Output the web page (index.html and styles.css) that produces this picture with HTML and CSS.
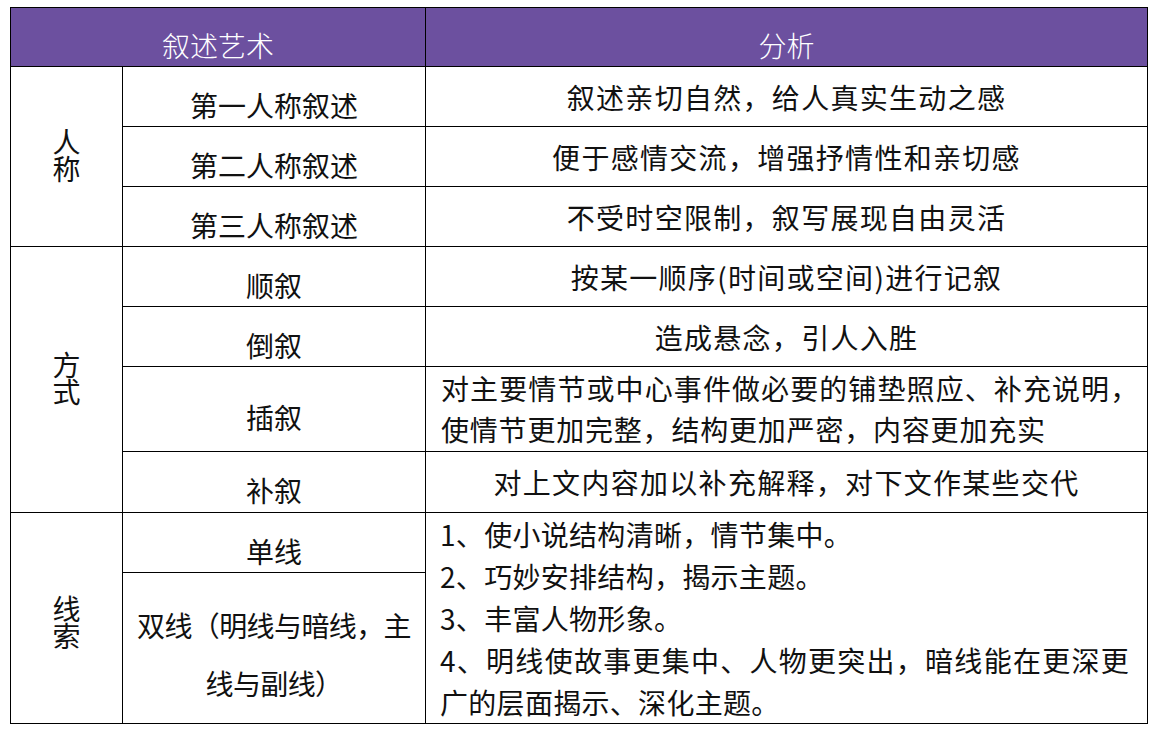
FILE: index.html
```html
<!DOCTYPE html>
<html lang="zh-CN">
<head>
<meta charset="utf-8">
<title>叙述艺术</title>
<link rel="stylesheet" href="styles.css">
</head>
<body>
<table class="narr">
  <colgroup><col class="c1"><col class="c2"><col class="c3"></colgroup>
  <thead>
    <tr class="head"><th colspan="2">叙述艺术</th><th>分析</th></tr>
  </thead>
  <tbody>
    <tr class="h60">
      <td rowspan="3" class="cat"><span class="vert">人称</span></td>
      <td class="kind">第一人称叙述</td>
      <td class="desc">叙述亲切自然，给人真实生动之感</td>
    </tr>
    <tr class="h60">
      <td class="kind">第二人称叙述</td>
      <td class="desc">便于感情交流，增强抒情性和亲切感</td>
    </tr>
    <tr class="h60">
      <td class="kind">第三人称叙述</td>
      <td class="desc">不受时空限制，叙写展现自由灵活</td>
    </tr>
    <tr class="h60">
      <td rowspan="4" class="cat"><span class="vert">方式</span></td>
      <td class="kind">顺叙</td>
      <td class="desc">按某一顺序(时间或空间)进行记叙</td>
    </tr>
    <tr class="h60">
      <td class="kind">倒叙</td>
      <td class="desc">造成悬念，引人入胜</td>
    </tr>
    <tr class="h85">
      <td class="kind">插叙</td>
      <td class="desc desc-lines">
        <div class="jline">对主要情节或中心事件做必要的铺垫照应、补充说明，</div>
        <div class="line">使情节更加完整，结构更加严密，内容更加充实</div>
      </td>
    </tr>
    <tr class="h61">
      <td class="kind">补叙</td>
      <td class="desc">对上文内容加以补充解释，对下文作某些交代</td>
    </tr>
    <tr class="h60">
      <td rowspan="2" class="cat cat-line"><span class="vert">线索</span></td>
      <td class="kind">单线</td>
      <td rowspan="2" class="desc desc-list">
        <div class="item">1、使小说结构清晰，情节集中。</div>
        <div class="item">2、巧妙安排结构，揭示主题。</div>
        <div class="item">3、丰富人物形象。</div>
        <div class="item jline">4、明线使故事更集中、人物更突出，暗线能在更深更</div>
        <div class="item">广的层面揭示、深化主题。</div>
      </td>
    </tr>
    <tr class="h150">
      <td class="kind kind-double">双线（明线与暗线，主<br>线与副线）</td>
    </tr>
  </tbody>
</table>
</body>
</html>
```

FILE: styles.css
```css
html, body {
  margin: 0;
  background: #ffffff;
}

body {
  padding: 7px 0 0 10px;
  font-family: "Noto Sans CJK SC", "Noto Sans", sans-serif;
  color: #111111;
}

.narr {
  border-collapse: collapse;
  table-layout: fixed;
  width: 1137px;
  font-size: 28px;
}

.c1 { width: 112px; }
.c2 { width: 303px; }
.c3 { width: 722px; }

.narr th,
.narr td {
  border: 1px solid #000000;
  padding: 0;
  text-align: center;
  vertical-align: middle;
  line-height: 30px;
  font-weight: 400;
}

.head { height: 59px; }
.h60 { height: 60px; }
.h61 { height: 61px; }
.h85 { height: 85px; }
.h150 { height: 151px; }

.narr .head th {
  background: #6c509f;
  color: #ffffff;
  font-weight: 300;
  padding-top: 16px;
}

.vert {
  display: inline-block;
  writing-mode: vertical-rl;
  text-orientation: upright;
  letter-spacing: -1px;
  line-height: 30px;
}

.narr td.cat-line {
  padding-top: 10px;
}

.narr td.kind {
  padding-top: 16px;
}

.narr td.desc {
  letter-spacing: 1.3px;
}

.narr td.kind-double {
  line-height: 58px;
  padding-top: 12px;
  letter-spacing: -0.6px;
}

.narr td.desc-lines {
  text-align: left;
  padding: 0 8px 0 15px;
  line-height: 41px;
  letter-spacing: 0.8px;
}

.jline {
  text-align: justify;
  text-align-last: justify;
  white-space: nowrap;
}

.line {
  white-space: nowrap;
}

.narr td.desc-list {
  text-align: left;
  vertical-align: top;
  padding: 0 18px 0 14px;
  line-height: 42px;
  letter-spacing: 0.3px;
}

.item {
  white-space: nowrap;
}

.desc-list .jline {
  white-space: normal;
}
```
